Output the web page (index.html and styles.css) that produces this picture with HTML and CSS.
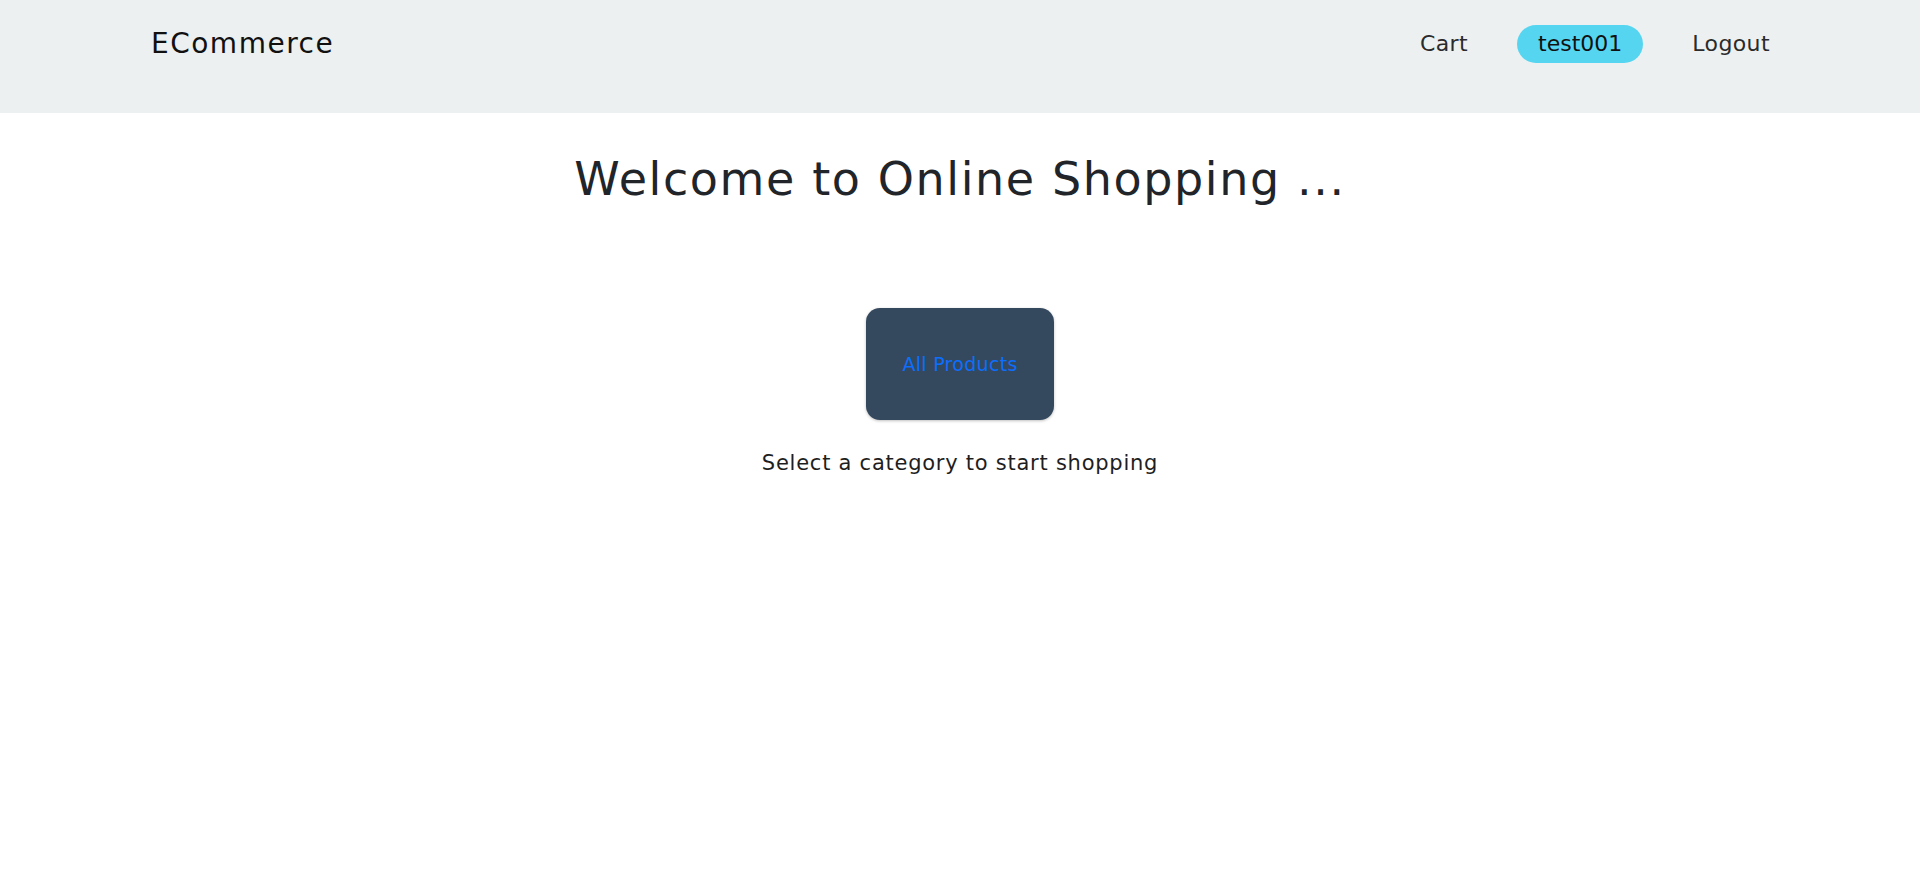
FILE: index.html
```html
<!DOCTYPE html>
<html lang="en">
<head>
<meta charset="utf-8">
<title>ECommerce</title>
<link rel="stylesheet" href="styles.css">
</head>
<body>
<nav class="navbar">
  <a class="brand" href="#">ECommerce</a>
  <ul class="nav-links">
    <li><a class="nav-link" href="#">Cart</a></li>
    <li><a class="nav-link user-pill" href="#">test001</a></li>
    <li><a class="nav-link" href="#">Logout</a></li>
  </ul>
</nav>
<main class="home">
  <h1 class="welcome">Welcome to Online Shopping ...</h1>
  <div class="categories">
    <a class="category-card" href="#">All Products</a>
  </div>
  <p class="hint">Select a category to start shopping</p>
</main>
</body>
</html>
```
FILE: styles.css
```css
* { box-sizing: border-box; }
html, body {
  margin: 0;
  padding: 0;
  background: #ffffff;
  font-family: "DejaVu Sans", "Open Sans", sans-serif;
  color: #212529;
}
a { text-decoration: none; }

.navbar {
  height: 113px;
  background: #ecf0f1;
  display: flex;
  align-items: flex-start;
  justify-content: space-between;
  padding: 25px 150px 0 151px;
}
.brand {
  font-size: 28px;
  line-height: 38px;
  letter-spacing: 1.5px;
  color: #111111;
}
.nav-links {
  list-style: none;
  margin: 0;
  padding: 0;
  display: flex;
  align-items: center;
  gap: 49px;
}
.nav-link {
  display: block;
  font-size: 22px;
  line-height: 38px;
  letter-spacing: 0.4px;
  color: #2b2b2b;
}
.user-pill {
  background: #55d5f0;
  color: #111111;
  border-radius: 19px;
  padding: 0 21px;
  height: 38px;
  letter-spacing: 0;
}

.home {
  display: flex;
  flex-direction: column;
  align-items: center;
}
.welcome {
  margin: 36px 0 0 0;
  font-size: 46px;
  line-height: 60px;
  letter-spacing: 1.6px;
  font-weight: 400;
  color: #212529;
}
.categories {
  margin-top: 99px;
  display: flex;
  gap: 24px;
}
.category-card {
  width: 188px;
  height: 112px;
  border-radius: 14px;
  background: #34495e;
  color: #0d6efd;
  font-size: 19px;
  letter-spacing: 0.3px;
  display: flex;
  align-items: center;
  justify-content: center;
  box-shadow: 0 1px 3px rgba(0,0,0,0.25);
}
.hint {
  margin: 28px 0 0 0;
  font-size: 21px;
  line-height: 30px;
  letter-spacing: 0.75px;
  color: #1e1e1e;
}
```
